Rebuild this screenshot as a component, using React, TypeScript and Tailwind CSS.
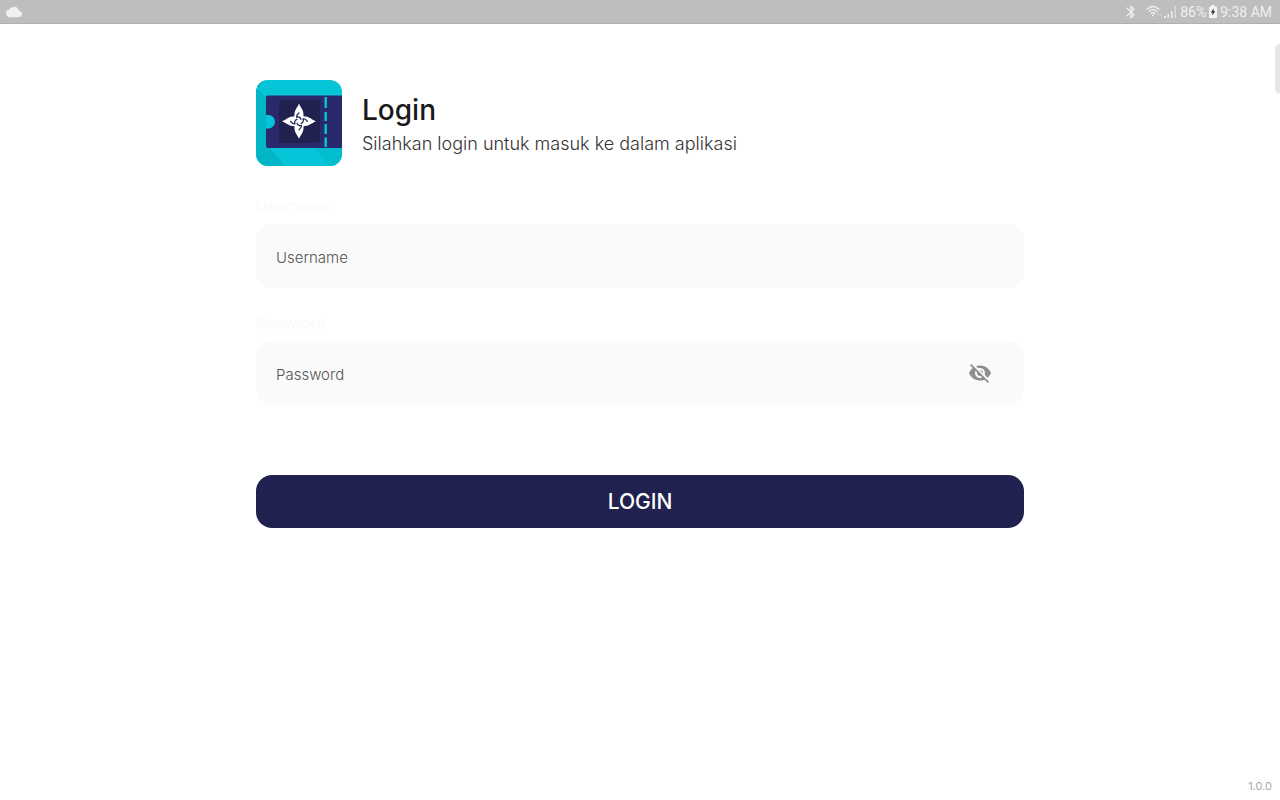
import { useState } from 'react';
import { MdBluetooth, MdCloud, MdVisibility, MdVisibilityOff } from 'react-icons/md';

function AppLogo() {
  const petal = 'M0 -17.500C2 -13 5 -11 4.500 -5C10 -5 12 -2 17 0C12 2 10 5 4.500 5C5 11 2 13 0 17.500C-2 13 -5 11 -4.500 5C-10 5 -12 2 -17 0C-12 -2 -10 -5 -4.500 -5C-5 -11 -2 -13 0 -17.500Z';
  return (
    <svg viewBox="0 0 86 86" className="size-[86px] shrink-0" aria-hidden="true">
      <defs>
        <clipPath id="tile">
          <rect width="86" height="86" rx="12" />
        </clipPath>
      </defs>
      <g clipPath="url(#tile)">
        <rect width="86" height="86" fill="#06c5d9" />
        <path d="M0 8L10 17V68H14L29 86H0Z" fill="#02b6c8" />
        <path d="M0 0H10L0 9Z" fill="#02b6c8" />
        <path d="M58 68H86V86H74Z" fill="#02bccf" />
        <path d="M12 15.500H86V68H12A2 2 0 0 1 10 66V48.500H13A6.800 6.800 0 0 0 13 35H10V17.500A2 2 0 0 1 12 15.500Z" fill="#282a6b" />
        <rect x="23" y="20" width="41" height="43" rx="4" fill="#20214f" />
        <path d="M69.700 17V28M69.700 32V41M69.700 44V54M69.700 57.500V67" stroke="#06c5d9" strokeWidth="2.400" />
        <g transform="translate(43 41.300)">
          <path d={petal} fill="#fff" />
          <g fill="none" stroke="#20214f" strokeWidth="1.200" strokeLinecap="round">
            {[0, 90, 180, 270].map((angle) => (
              <path key={angle} d="M-2.500 -4C-3 -6 -1 -7.500 0 -8.500M-2.500 -4C-1 -5 1.500 -4 2 -2" transform={`rotate(${angle})`} />
            ))}
          </g>
        </g>
      </g>
    </svg>
  );
}

function WifiIcon() {
  return (
    <svg viewBox="0 0 17 14" className="h-[14px] w-[17px]" fill="none" stroke="currentColor" strokeWidth="1.300" aria-hidden="true">
      <path d="M0.800 4.500Q7 -1.500 13.200 4.500M2.800 6.700Q7 2.600 11.200 6.700M4.800 8.700Q7 6.800 9.200 8.700" />
      <circle cx="7" cy="10.500" r="1" fill="currentColor" stroke="none" />
      <path d="M10 9.500L11.500 7.500L13 9.500ZM13 9.500H16L14.500 11.500Z" fill="currentColor" stroke="none" opacity="0.500" />
    </svg>
  );
}

function SignalIcon() {
  return (
    <svg viewBox="0 0 13 13" className="size-[13px]" fill="currentColor" aria-hidden="true">
      <path d="M0 11H2V13H0ZM3.500 9H5V13H3.500ZM7 6H8.500V13H7Z" />
      <path d="M10.500 1H12V13H10.500Z" opacity="0.600" />
    </svg>
  );
}

function BatteryIcon() {
  return (
    <svg viewBox="0 0 8 13" className="h-[13px] w-[8px]" aria-hidden="true">
      <path d="M2.500 0H5.500V1.500H7A1 1 0 0 1 8 2.500V12A1 1 0 0 1 7 13H1A1 1 0 0 1 0 12V2.500A1 1 0 0 1 1 1.500H2.500Z" fill="#f4f4f4" />
      <path d="M4.800 3.200L1.800 7.500H3.600L3.200 10.500L6.200 6.200H4.400Z" fill="#222" />
    </svg>
  );
}

function StatusBar() {
  return (
    <header className="flex h-6 items-center justify-between border-b border-[#b0b0b0] bg-[#bebebe] px-2 font-['Roboto',sans-serif] text-sm text-[#f0f0f0]">
      <MdCloud className="-ml-0.5 size-4" aria-hidden="true" />
      <div className="flex items-center gap-[3px]">
        <MdBluetooth className="mr-1 size-4" aria-hidden="true" />
        <div className="flex items-center gap-px">
          <WifiIcon />
          <SignalIcon />
        </div>
        <span>86%</span>
        <BatteryIcon />
        <span>9:38 AM</span>
      </div>
    </header>
  );
}

export default function App() {
  const [visible, setVisible] = useState(false);
  const field = 'h-16 w-full rounded-2xl bg-[#fafafa] px-5 pt-0.5 text-[15px] font-light text-[#333] outline-none placeholder:text-[#555]';
  const caption = 'mb-2 block text-[15px] leading-[18px] text-[#fafafa]';
  return (
    <div className="relative flex min-h-screen flex-col bg-white font-['Inter',sans-serif] text-[#1a1a1a]">
      <StatusBar />
      <div className="absolute top-11 right-0 h-[50px] w-[5px] rounded-l-full bg-[#e6e6e6]" />
      <main className="mx-auto w-3/5 flex-1 pt-14">
        <div className="flex items-center gap-5">
          <AppLogo />
          <div className="pt-0.5">
            <h1 className="text-[28px] leading-9 font-medium">Login</h1>
            <p className="mt-1 text-lg leading-6 font-light text-[#333]">Silahkan login untuk masuk ke dalam aplikasi</p>
          </div>
        </div>
        <form className="mt-8" onSubmit={(event) => event.preventDefault()}>
          <label htmlFor="username" className={caption}>Username</label>
          <input id="username" placeholder="Username" autoComplete="username" className={`${field} block`} />
          <label htmlFor="password" className={`${caption} mt-[27px]`}>Password</label>
          <div className="relative">
            <input id="password" type={visible ? 'text' : 'password'} placeholder="Password" autoComplete="current-password" className={`${field} block pr-20`} />
            <button
              type="button"
              aria-label="Toggle password visibility"
              onClick={() => setVisible(!visible)}
              className="absolute inset-y-0 right-8 flex items-center text-[#8e8e8e]"
            >
              {visible ? <MdVisibility className="size-6" /> : <MdVisibilityOff className="size-6" />}
            </button>
          </div>
          <button type="submit" className="mt-[70px] h-[53px] w-full rounded-2xl bg-[#20214f] text-[21px] font-medium text-white">LOGIN</button>
        </form>
      </main>
      <footer className="px-2 pb-2 text-right text-[11px] leading-3 text-[#a8a8a8]">1.0.0</footer>
    </div>
  );
}
